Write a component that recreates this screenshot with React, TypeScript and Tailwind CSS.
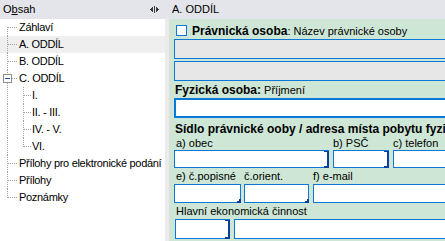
import React from "react";

type Node = { label: string; level: 0 | 1; kind: "first" | "mid" | "last" | "open"; active?: boolean };

const tree: Node[] = [
  { label: "Záhlaví", level: 0, kind: "first" },
  { label: "A. ODDÍL", level: 0, kind: "mid", active: true },
  { label: "B. ODDÍL", level: 0, kind: "mid" },
  { label: "C. ODDÍL", level: 0, kind: "open" },
  { label: "I.", level: 1, kind: "mid" },
  { label: "II. - III.", level: 1, kind: "mid" },
  { label: "IV. - V.", level: 1, kind: "mid" },
  { label: "VI.", level: 1, kind: "last" },
  { label: "Přílohy pro elektronické podání", level: 0, kind: "mid" },
  { label: "Přílohy", level: 0, kind: "mid" },
  { label: "Poznámky", level: 0, kind: "last" },
];

const dot = { stroke: "#a0a0a0", strokeDasharray: "1 1", shapeRendering: "crispEdges" as const };

function Lines({ node }: { node: Node }) {
  if (node.level === 1) {
    return (
      <svg width="32" height="17" className="shrink-0">
        <line x1="7.5" y1="0" x2="7.5" y2="17" {...dot} />
        <line x1="23.5" y1="0" x2="23.5" y2={node.kind === "last" ? 9 : 17} {...dot} />
        <line x1="24" y1="8.5" x2="31" y2="8.5" {...dot} />
      </svg>
    );
  }
  if (node.kind === "open") {
    return (
      <svg width="19" height="17" className="shrink-0">
        <line x1="7.5" y1="0" x2="7.5" y2="4" {...dot} />
        <line x1="7.5" y1="13" x2="7.5" y2="17" {...dot} />
        <rect x="3.5" y="4.5" width="8" height="8" fill="#fff" stroke="#8e8f8f" shapeRendering="crispEdges" />
        <line x1="5" y1="8.5" x2="10" y2="8.5" stroke="#1f4fa8" shapeRendering="crispEdges" />
        <line x1="12" y1="8.5" x2="18" y2="8.5" {...dot} />
      </svg>
    );
  }
  const top = node.kind === "first" ? 8 : 0;
  const bottom = node.kind === "last" ? 9 : 17;
  return (
    <svg width="19" height="17" className="shrink-0">
      <line x1="7.5" y1={top} x2="7.5" y2={bottom} {...dot} />
      <line x1="8" y1="8.5" x2="18" y2="8.5" {...dot} />
    </svg>
  );
}

function Field({ w, h = 19, mark, gray, thick }: { w: string; h?: number; mark?: "bracket" | "corner"; gray?: boolean; thick?: boolean }) {
  return (
    <div
      className={`relative shrink-0 ${w} ${thick ? "border-2" : "border"} border-[#0a78d6] ${gray ? "bg-[#e7e7e7]" : "bg-white"}`}
      style={{ height: h }}
    >
      {mark === "bracket" && (
        <div className="absolute right-[-1px] top-0 bottom-[-1px] w-[5px] border-r-2 border-t border-b-2 border-[#0d3f9e]" />
      )}
      {mark === "corner" && (
        <div className="absolute right-[-1px] bottom-[-1px] w-[4px] h-[4px] border-r-2 border-b-2 border-[#0d3f9e]" />
      )}
    </div>
  );
}

export default function App() {
  return (
    <div className="w-[445px] h-[241px] flex overflow-hidden bg-white text-black text-[11px] leading-none font-['Liberation_Sans',Arial,sans-serif]">
      {/* Obsah */}
      <div className="w-[165px] shrink-0 flex flex-col">
        <div className="h-[19px] bg-[#e4e5ea] flex items-center justify-between pl-[3px] pr-[6px]">
          <span>
            O<span className="underline">b</span>sah
          </span>
          <svg width="9" height="7" viewBox="0 0 9 7" shapeRendering="crispEdges">
            <path d="M0 3.5L3 0.5V6.5Z" fill="#3a3a3a" />
            <rect x="4" y="0" width="1" height="7" fill="#3a3a3a" />
            <path d="M9 3.5L6 0.5V6.5Z" fill="#3a3a3a" />
          </svg>
        </div>
        <div className="flex-1 flex flex-col overflow-hidden">
          {tree.map((n) => (
            <div key={n.label} className={`h-[17px] flex items-center whitespace-nowrap ${n.active ? "bg-[#efefef]" : ""}`}>
              <Lines node={n} />
              <span className="tracking-[-0.3px]">{n.label}</span>
            </div>
          ))}
        </div>
      </div>

      {/* splitter */}
      <div className="w-[5px] shrink-0 flex flex-col">
        <div className="h-[19px] bg-[#e4e5ea]" />
        <div className="flex-1 bg-[#ebebeb] border-r border-[#dedede]" />
      </div>

      {/* A. ODDÍL */}
      <div className="flex-1 min-w-0 flex flex-col overflow-hidden">
        <div className="h-[19px] shrink-0 bg-[#e4e5ea] flex items-center pl-[2px]">A. ODDÍL</div>
        <div className="flex-1 bg-[#cde6d5] pl-[4px] pt-[3px] flex flex-col w-[320px]">
          <div className="h-[17px] flex items-center pl-[2px] gap-[5px] whitespace-nowrap">
            <div className="w-[11px] h-[11px] border border-[#0a78d6] bg-white shrink-0" />
            <span>
              <b className="text-[12px]">Právnická osoba</b>: Název právnické osoby
            </span>
          </div>
          <Field w="w-[320px]" h={20} gray />
          <div className="mt-[2px]">
            <Field w="w-[320px]" h={20} gray />
          </div>
          <div className="h-[17px] flex items-center pl-[1px] whitespace-nowrap">
            <span>
              <b className="text-[12px]">Fyzická osoba:</b> Příjmení
            </span>
          </div>
          <Field w="w-[320px]" h={20} thick />
          <div className="mt-[3px] h-[16px] flex items-center pl-[1px] whitespace-nowrap">
            <b className="text-[12px]">Sídlo právnické ooby / adresa místa pobytu fyzické osoby</b>
          </div>
          <div className="h-[13px] flex items-center whitespace-nowrap">
            <span className="w-[159px] pl-[2px]">a) obec</span>
            <span className="w-[60px]">b) PSČ</span>
            <span>c) telefon</span>
          </div>
          <div className="flex">
            <Field w="w-[155px]" h={18} mark="bracket" />
            <div className="ml-[4px]">
              <Field w="w-[56px]" h={18} mark="bracket" />
            </div>
            <div className="ml-[4px]">
              <Field w="w-[80px]" h={18} />
            </div>
          </div>
          <div className="h-[16px] flex items-center whitespace-nowrap">
            <span className="w-[70px] pl-[2px]">e) č.popisné</span>
            <span className="w-[69px]">č.orient.</span>
            <span>f) e-mail</span>
          </div>
          <div className="flex">
            <Field w="w-[67px]" mark="corner" />
            <div className="ml-[3px]">
              <Field w="w-[65px]" mark="corner" />
            </div>
            <div className="ml-[4px]">
              <Field w="w-[160px]" />
            </div>
          </div>
          <div className="h-[16px] flex items-center pl-[2px] whitespace-nowrap">Hlavní ekonomická činnost</div>
          <div className="flex">
            <div className="ml-[1px]">
              <Field w="w-[55px]" h={20} mark="bracket" />
            </div>
            <div className="ml-[4px]">
              <Field w="w-[240px]" h={20} />
            </div>
          </div>
        </div>
      </div>
    </div>
  );
}
